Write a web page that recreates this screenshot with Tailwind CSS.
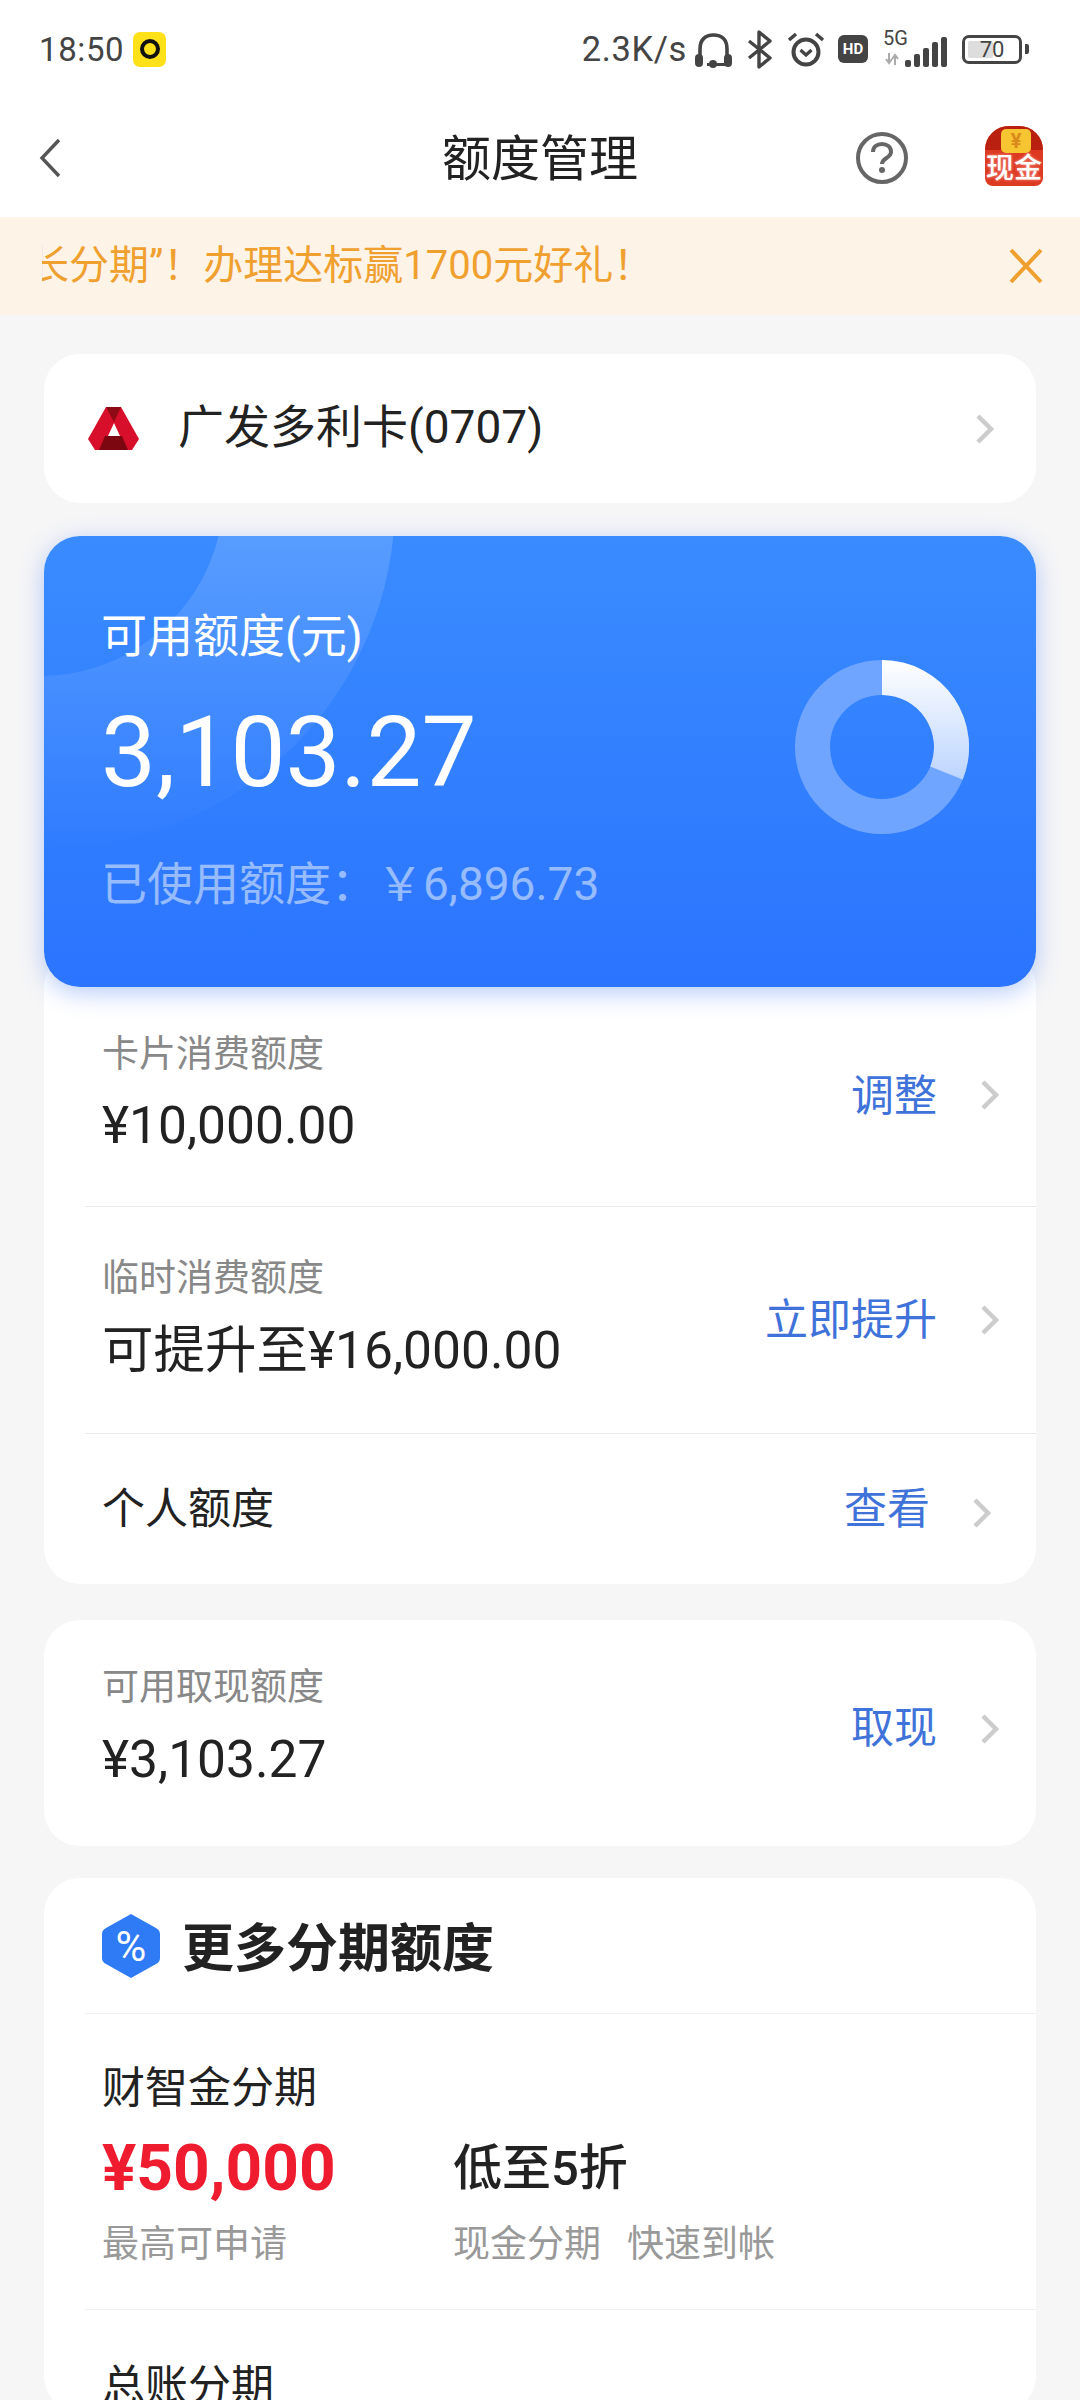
<!DOCTYPE html>
<html lang="zh">
<head>
<meta charset="utf-8">
<script src="https://cdn.jsdelivr.net/npm/@tailwindcss/browser@4"></script>
</head>
<body class="m-0 bg-[#f6f6f7]">
<div class="w-[1080px] h-[2400px] overflow-hidden bg-[#f6f6f7] text-[#222] font-['Roboto','Noto_Sans_CJK_SC',sans-serif]">

  <!-- status bar -->
  <div class="h-[98px] bg-white flex items-center pl-[39px] text-[#444]">
    <span class="text-[33px] tracking-[0.6px] leading-none">18:50</span>
    <span class="ml-[9px] w-[33px] h-[35px] rounded-[7px] bg-[#ffe11a] flex items-center justify-center">
      <span class="w-[20px] h-[20px] rounded-full border-[4px] border-[#111]"></span>
    </span>
    <span class="ml-auto text-[34.500px] leading-none tracking-[0.6px]">2.3K/s</span>
    <svg class="ml-[8px] mt-[2px]" width="37" height="35" viewBox="0 0 37 35" fill="none"><path d="M5 26V16C5 7 10 2 18.500 2S32 7 32 16v10" stroke="#444" stroke-width="3.600"/><rect x="0" y="21" width="8" height="13" rx="4" fill="#444"/><rect x="29" y="21" width="8" height="13" rx="4" fill="#444"/><path d="M12 31.500h18" stroke="#444" stroke-width="3"/><circle cx="18" cy="31" r="4" fill="#444"/></svg>
    <svg class="ml-[15px]" width="25" height="39" viewBox="0 0 25 39" fill="none"><path d="M2 11l21 17-11 9V2l11 9L2 28" stroke="#444" stroke-width="3.400" stroke-linejoin="round"/></svg>
    <svg class="ml-[15px]" width="38" height="36" viewBox="0 0 38 36" fill="none"><circle cx="19" cy="21" r="12.500" stroke="#444" stroke-width="4"/><path d="M13.500 19l5.500 5 5.500-5" stroke="#444" stroke-width="3.200"/><path d="M2 9l7-6M36 9l-7-6" stroke="#444" stroke-width="3.500"/></svg>
    <span class="ml-[13px] w-[30px] h-[28px] rounded-[6px] bg-[#444] text-white text-[15px] font-bold leading-[28px] text-center">HD</span>
    <div class="ml-[17px] w-[62px] h-[36px] relative">
      <span class="absolute -left-[2px] -top-[3px] text-[20px] leading-[20px] text-[#444]">5G</span>
      <svg class="absolute left-0 bottom-[2px]" width="14" height="12" viewBox="0 0 14 12" fill="none"><path d="M4 0v9M1 6l3 4 3-4" stroke="#aaa" stroke-width="2"/><path d="M10 12V3M7 6l3-4 3 4" stroke="#aaa" stroke-width="2"/></svg>
      <div class="absolute right-0 bottom-0 flex items-end gap-[3px]">
        <i class="block w-[6px] h-[7px] bg-[#444] rounded-[2px]"></i>
        <i class="block w-[6px] h-[13px] bg-[#444] rounded-[2px]"></i>
        <i class="block w-[6px] h-[19px] bg-[#444] rounded-[2px]"></i>
        <i class="block w-[6px] h-[25px] bg-[#444] rounded-[2px]"></i>
        <i class="block w-[6px] h-[30px] bg-[#444] rounded-[2px]"></i>
      </div>
    </div>
    <div class="ml-[15px] w-[60px] h-[29px] rounded-[7px] border-[3px] border-[#444] p-[3px] relative">
      <div class="w-[25px] h-full bg-[#ddd] rounded-[2px]"></div>
      <span class="absolute inset-0 text-center text-[22px] leading-[24px] text-[#444]">70</span>
    </div>
    <span class="ml-[3px] mr-[51px] w-[4px] h-[10px] bg-[#444] rounded-r-[2px]"></span>
  </div>

  <!-- nav -->
  <div class="h-[119px] bg-white flex items-center relative">
    <svg class="ml-[38px]" width="24" height="40" viewBox="0 0 24 40" fill="none"><path d="M21 2L4 20l17 18" stroke="#555" stroke-width="3.400"/></svg>
    <span class="absolute left-0 right-0 pt-[4px] text-center text-[49px] leading-none text-[#222]">额度管理</span>
    <svg class="ml-auto" width="54" height="54" viewBox="0 0 54 54" fill="none"><circle cx="27" cy="27" r="24" stroke="#666" stroke-width="4"/><path d="M18 21c0-5 4-8 9-8s9 3 9 8c0 6-9 6-9 12" stroke="#666" stroke-width="4"/><circle cx="27" cy="39" r="3" fill="#666"/></svg>
    <div class="ml-[76px] mr-[37px] mb-[3px] w-[58px] h-[60px] relative rounded-[8px] rounded-t-[24px] bg-[#dd3a22] overflow-hidden">
      <div class="w-full h-[24px] bg-[#b9200f]"></div>
      <span class="absolute left-[16px] top-[3px] w-[30px] h-[24px] rounded-[5px] bg-[#f7c531] text-[#d98a1a] text-[20px] leading-[24px] text-center font-bold">¥</span>
      <span class="absolute left-0 right-0 top-[27px] text-center text-[28px] leading-[32px] text-white font-medium whitespace-nowrap [text-shadow:0_0_3px_#f9a8a0]">现金</span>
    </div>
  </div>

  <!-- banner -->
  <div class="h-[98px] bg-[#fdf3e7] flex items-center pl-[42px] pr-[36px]">
    <div class="overflow-hidden">
      <span class="block -ml-[13px] text-[40px] text-[#f0a02e] leading-[48px] whitespace-nowrap">长分期”！办理达标赢1700元好礼！</span>
    </div>
    <svg class="ml-auto" width="36" height="36" viewBox="0 0 36 36" fill="none"><path d="M3 2l30 32M33 2L3 34" stroke="#f0a02e" stroke-width="4"/></svg>
  </div>

  <div class="px-[44px] pt-[39px]">
    <!-- card selector -->
    <div class="h-[149px] bg-white rounded-[36px] flex items-center pl-[44px] pr-[41px]">
      <svg width="52" height="44" viewBox="0 0 52 44"><path d="M18 0h15l18 32-7 11H7L0 32z" fill="#d80f2a"/><path d="M18 0h15l-7 15z" fill="#8f0a14"/><path d="M17 29h17l6 14H11z" fill="#7c0710"/><path d="M26 16l6 13H20z" fill="#fff"/></svg>
      <span class="ml-[38px] mb-[4px] text-[46px] leading-none text-[#222]">广发多利卡(0707)</span>
      <svg class="ml-auto" width="20" height="30" viewBox="0 0 20 30" fill="none"><path d="M3 2l13 13L3 28" stroke="#ccc" stroke-width="4.500"/></svg>
    </div>

    <!-- limit card -->
    <div class="relative z-10 mt-[33px] h-[451px] rounded-[36px] overflow-hidden bg-gradient-to-b from-[#3a8bff] to-[#2b74ff] shadow-[0_6px_24px_rgba(50,110,240,0.35)]">
      <svg class="absolute left-0 top-0" width="1000" height="451" viewBox="0 0 1000 451">
        <defs><linearGradient id="r" gradientUnits="userSpaceOnUse" x1="0" y1="0" x2="0" y2="320"><stop offset="0" stop-color="#fff" stop-opacity="0.15"/><stop offset="1" stop-color="#fff" stop-opacity="0"/></linearGradient></defs>
        <path fill-rule="evenodd" fill="url(#r)" d="M-339 -34a345 345 0 1 0 690 0a345 345 0 1 0 -690 0zM-188 -44a184 184 0 1 0 368 0a184 184 0 1 0 -368 0z"/>
      </svg>
      <div class="relative pl-[57px] pt-[72px] flex flex-col">
        <span class="text-[46px] leading-[56px] text-white">可用额度(元)</span>
        <span class="mt-[33px] text-[98px] leading-[112px] text-white">3,103.27</span>
        <span class="mt-[47px] text-[46px] leading-[56px] text-white/50">已使用额度：￥6,896.73</span>
      </div>
      <svg class="absolute left-[751px] top-[124px]" width="174" height="174" viewBox="0 0 174 174">
        <defs><linearGradient id="g" x1="0" y1="0" x2="0" y2="1"><stop offset="0" stop-color="#fff"/><stop offset="1" stop-color="#bcd5ff"/></linearGradient></defs>
        <circle cx="87" cy="87" r="69.500" fill="none" stroke="#6fa5ff" stroke-width="35"/>
        <path d="M87 0A87 87 0 0 1 167.700 119.600L135.200 106.500A52 52 0 0 0 87 35z" fill="url(#g)"/>
      </svg>
    </div>

    <!-- limits list -->
    <div class="-mt-[36px] bg-white rounded-[36px] pt-[36px] pl-[41px]">
      <div class="h-[220px] border-b border-[#eaeaea] flex items-center pl-[17px] pr-[36px]">
        <div class="flex flex-col pb-[6px]">
          <span class="text-[37px] leading-[48px] text-[#888]">卡片消费额度</span>
          <span class="mt-[17px] text-[51.500px] leading-[60px] text-[#222]">¥10,000.00</span>
        </div>
        <span class="ml-auto text-[43px] leading-none text-[#3f73d9]">调整</span>
        <svg class="ml-[43px] mb-[4px]" width="20" height="30" viewBox="0 0 20 30" fill="none"><path d="M3 2l13 13L3 28" stroke="#ccc" stroke-width="4.500"/></svg>
      </div>
      <div class="h-[227px] border-b border-[#eaeaea] flex items-center pl-[17px] pr-[36px]">
        <div class="flex flex-col pb-[4px]">
          <span class="text-[37px] leading-[48px] text-[#888]">临时消费额度</span>
          <span class="mt-[18px] text-[51.500px] leading-[60px] text-[#222]">可提升至¥16,000.00</span>
        </div>
        <span class="ml-auto text-[43px] leading-none text-[#3f73d9]">立即提升</span>
        <svg class="ml-[43px]" width="20" height="30" viewBox="0 0 20 30" fill="none"><path d="M3 2l13 13L3 28" stroke="#ccc" stroke-width="4.500"/></svg>
      </div>
      <div class="h-[150px] flex items-center pl-[17px] pr-[44px]">
        <span class="text-[43px] leading-none text-[#222]">个人额度</span>
        <span class="ml-auto text-[43px] leading-none text-[#3f73d9]">查看</span>
        <svg class="ml-[42px] mt-[8px]" width="20" height="30" viewBox="0 0 20 30" fill="none"><path d="M3 2l13 13L3 28" stroke="#ccc" stroke-width="4.500"/></svg>
      </div>
    </div>

    <!-- cash -->
    <div class="mt-[36px] h-[226px] bg-white rounded-[36px] flex items-center pl-[58px] pr-[36px]">
      <div class="flex flex-col pb-[12px]">
        <span class="text-[37px] leading-[48px] text-[#888]">可用取现额度</span>
        <span class="mt-[18px] text-[51.500px] leading-[60px] text-[#222]">¥3,103.27</span>
      </div>
      <span class="ml-auto mb-[9px] text-[43px] leading-none text-[#3f73d9]">取现</span>
      <svg class="ml-[43px] mb-[9px]" width="20" height="30" viewBox="0 0 20 30" fill="none"><path d="M3 2l13 13L3 28" stroke="#ccc" stroke-width="4.500"/></svg>
    </div>

    <!-- installments -->
    <div class="mt-[32px] bg-white rounded-[36px] pl-[41px]">
      <div class="h-[136px] border-b border-[#f0f0f0] flex items-center pl-[17px]">
        <svg width="58" height="64" viewBox="0 0 58 64"><path d="M29 0l25 14q4 2 4 6v24q0 4-4 6L29 64 4 50q-4-2-4-6V20q0-4 4-6z" fill="#2f7bf6"/><text x="29" y="47" text-anchor="middle" font-size="42" fill="#fff" font-family="Roboto">%</text></svg>
        <span class="ml-[22px] pt-[8px] text-[52px] leading-none font-bold text-[#222]">更多分期额度</span>
      </div>
      <div class="h-[296px] border-b border-[#f0f0f0] flex flex-col pl-[17px] pt-[48px]">
        <span class="text-[43px] leading-[52px] text-[#222]">财智金分期</span>
        <div class="mt-[16px] flex">
          <div class="w-[351px] flex flex-col">
            <span class="text-[64px] leading-[78px] font-bold text-[#ee1c2e]">¥50,000</span>
            <span class="mt-[13px] text-[37px] leading-[48px] text-[#999]">最高可申请</span>
          </div>
          <div class="flex flex-col">
            <span class="text-[49px] leading-[78px] font-medium text-[#222]">低至5折</span>
            <span class="mt-[13px] text-[37px] leading-[48px] text-[#999]">现金分期<span class="ml-[26px]">快速到帐</span></span>
          </div>
        </div>
      </div>
      <div class="pl-[17px] pt-[50px]">
        <span class="text-[43px] leading-[52px] text-[#222]">总账分期</span>
      </div>
    </div>
  </div>
</div>
</body>
</html>
